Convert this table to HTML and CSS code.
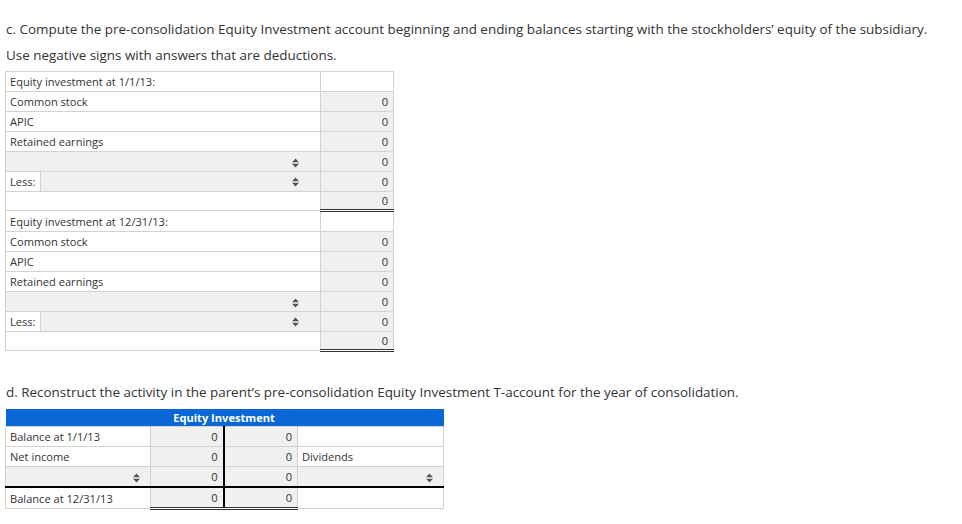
FILE: index.html
```html
<!DOCTYPE html>
<html>
<head>
<meta charset="utf-8">
<link rel="stylesheet" href="styles.css">
</head>
<body>
<div class="page">
  <p class="q">c. Compute the pre-consolidation Equity Investment account beginning and ending balances starting with the stockholders’ equity of the subsidiary.</p>
  <p class="q">Use negative signs with answers that are deductions.</p>
  <table class="eq">
    <colgroup><col class="c-label"><col class="c-val"></colgroup>
    <tr><td class="lbl">Equity investment at 1/1/13:</td><td class="val blank"></td></tr>
    <tr><td class="lbl">Common stock</td><td class="val">0</td></tr>
    <tr><td class="lbl">APIC</td><td class="val">0</td></tr>
    <tr><td class="lbl">Retained earnings</td><td class="val">0</td></tr>
    <tr><td class="sel"><svg class="arr" width="7" height="10" viewBox="0 0 7 10"><path d="M0 4.2 L3.5 0.5 L7 4.2Z M0 5.8 L3.5 9.5 L7 5.8Z"/></svg></td><td class="val">0</td></tr>
    <tr><td class="less"><div class="less-wrap"><span class="less-lbl">Less:</span><span class="sel-box"><svg class="arr" width="7" height="10" viewBox="0 0 7 10"><path d="M0 4.2 L3.5 0.5 L7 4.2Z M0 5.8 L3.5 9.5 L7 5.8Z"/></svg></span></div></td><td class="val">0</td></tr>
    <tr><td class="lbl short"></td><td class="val total">0</td></tr>
    <tr><td class="lbl">Equity investment at 12/31/13:</td><td class="val blank"></td></tr>
    <tr><td class="lbl">Common stock</td><td class="val">0</td></tr>
    <tr><td class="lbl">APIC</td><td class="val">0</td></tr>
    <tr><td class="lbl">Retained earnings</td><td class="val">0</td></tr>
    <tr><td class="sel"><svg class="arr" width="7" height="10" viewBox="0 0 7 10"><path d="M0 4.2 L3.5 0.5 L7 4.2Z M0 5.8 L3.5 9.5 L7 5.8Z"/></svg></td><td class="val">0</td></tr>
    <tr><td class="less"><div class="less-wrap"><span class="less-lbl">Less:</span><span class="sel-box"><svg class="arr" width="7" height="10" viewBox="0 0 7 10"><path d="M0 4.2 L3.5 0.5 L7 4.2Z M0 5.8 L3.5 9.5 L7 5.8Z"/></svg></span></div></td><td class="val">0</td></tr>
    <tr><td class="lbl short"></td><td class="val total">0</td></tr>
  </table>

  <p class="q q-d">d. Reconstruct the activity in the parent’s pre-consolidation Equity Investment T-account for the year of consolidation.</p>
  <table class="t">
    <colgroup><col class="t-l"><col class="t-dr"><col class="t-cr"><col class="t-r"></colgroup>
    <tr class="t-head"><th></th><th colspan="2">Equity Investment</th><th></th></tr>
    <tr><td class="lbl">Balance at 1/1/13</td><td class="val dr">0</td><td class="val cr">0</td><td class="lbl"></td></tr>
    <tr><td class="lbl">Net income</td><td class="val dr">0</td><td class="val cr">0</td><td class="lbl">Dividends</td></tr>
    <tr><td class="sel"><svg class="arr" width="7" height="10" viewBox="0 0 7 10"><path d="M0 4.2 L3.5 0.5 L7 4.2Z M0 5.8 L3.5 9.5 L7 5.8Z"/></svg></td><td class="val dr">0</td><td class="val cr">0</td><td class="sel"><svg class="arr" width="7" height="10" viewBox="0 0 7 10"><path d="M0 4.2 L3.5 0.5 L7 4.2Z M0 5.8 L3.5 9.5 L7 5.8Z"/></svg></td></tr>
    <tr class="bal"><td class="lbl">Balance at 12/31/13</td><td class="val dr end">0</td><td class="val cr end">0</td><td class="lbl"></td></tr>
  </table>
</div>
</body>
</html>
```

FILE: styles.css
```css
html, body {
  margin: 0;
  padding: 0;
  background: #fff;
}
body {
  font-family: "Open Sans", "DejaVu Sans", sans-serif;
  color: #333;
}
.page {
  padding: 16px 0 0 5px;
}
.q {
  margin: 0;
  padding-left: 1px;
  font-size: 13.45px;
  line-height: 26px;
  color: #333;
  white-space: nowrap;
}
.eq, .t {
  border-collapse: collapse;
  table-layout: fixed;
  font-size: 11.1px;
}
.eq {
  margin-top: 3px;
  width: 388px;
}
.c-label { width: 315px; }
.c-val { width: 73px; }
.eq td, .t td {
  border: 1px solid #d2d2d2;
  height: 19px;
  padding: 0 4px;
  line-height: 19px;
  white-space: nowrap;
  overflow: hidden;
}
.eq td.short,
.eq td.total {
  height: 17px;
  line-height: 17px;
}
.lbl {
  background: #fff;
  text-align: left;
}
.val {
  background: #f0f0f0;
  text-align: right;
  padding-right: 5px !important;
}
.val.blank {
  background: #fff;
}
.sel {
  background: #f0f0f0;
  text-align: right;
  padding-right: 21px !important;
}
.arr {
  display: inline-block;
  vertical-align: middle;
  fill: #555;
}
.eq td.less {
  padding: 0;
  background: #f0f0f0;
}
.less-wrap {
  display: flex;
  height: 19px;
}
.less-lbl {
  width: 30px;
  padding-left: 4px;
  background: #fff;
  border-right: 1px solid #d2d2d2;
}
.sel-box {
  flex: 1;
  display: flex;
  justify-content: flex-end;
  align-items: center;
  padding-right: 21px;
}
.eq td.total {
  border-top: 1px solid #222;
  border-bottom: 3px double #333;
}
.q-d {
  margin-top: 27px;
}
.t {
  margin-top: 4px;
  width: 438px;
}
.t-l { width: 145px; }
.t-dr { width: 73px; }
.t-cr { width: 74px; }
.t-r { width: 146px; }
.t-head th {
  background: #0a68d6;
  color: #fff;
  font-weight: 700;
  font-size: 11.1px;
  height: 17px;
  padding: 0;
  line-height: 17px;
  border: none;
  text-align: center;
}
.t td.sel {
  padding-right: 10px !important;
}
.t td.dr {
  border-right: 2px solid #000;
}
.t tr.bal td {
  border-top: 2px solid #000;
}
.t td.end {
  border-bottom: 3px double #333;
}
```
